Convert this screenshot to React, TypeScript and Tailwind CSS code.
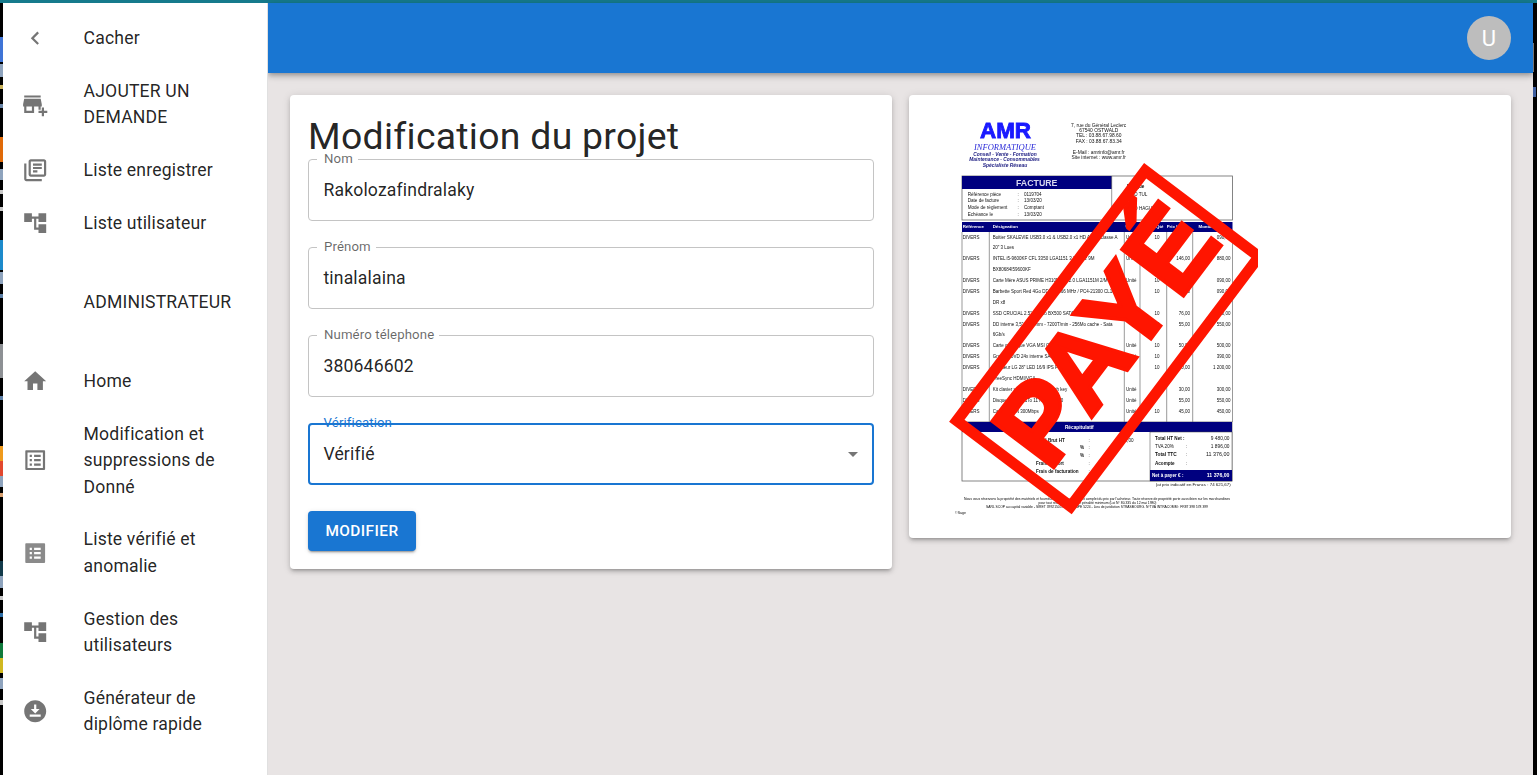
import React from "react";

const P: Record<string, string> = {
  chevron: "M15.41 7.41 14 6l-6 6 6 6 1.41-1.41L10.83 12z",
  addBusiness: "M15 17h2v-3h1v-2l-1-5H2l-1 5v2h1v6h9v-6h4v3zm-6 1H4v-4h5v4zM2 4h15v2H2zM20 18v-3h-2v3h-3v2h3v3h2v-3h3v-2z",
  library: "M4 6H2v14c0 1.1.9 2 2 2h14v-2H4V6zm16-4H8c-1.1 0-2 .9-2 2v12c0 1.1.9 2 2 2h12c1.1 0 2-.9 2-2V4c0-1.1-.9-2-2-2zm0 14H8V4h12v12zM10 9h8v2h-8zm0 3h4v2h-4zm0-6h8v2h-8z",
  tree: "M22 11V3h-7v3H9V3H2v8h7V8h2v10h4v3h7v-8h-7v3h-2V8h2v3z",
  home: "M10 20v-6h4v6h5v-8h3L12 3 2 12h3v8z",
  listOutlined: "M19 5v14H5V5h14m1.1-2H3.9c-.5 0-.9.4-.9.9v16.2c0 .4.4.9.9.9h16.2c.4 0 .9-.5.9-.9V3.9c0-.5-.5-.9-.9-.9zM11 7h6v2h-6V7zm0 4h6v2h-6v-2zm0 4h6v2h-6zM7 7h2v2H7zm0 4h2v2H7zm0 4h2v2H7z",
  listFilled: "M20.1 3H3.9c-.5 0-.9.4-.9.9v16.2c0 .4.4.9.9.9h16.2c.4 0 .9-.5.9-.9V3.9c0-.5-.5-.9-.9-.9zM11 7h6v2h-6V7zm0 4h6v2h-6v-2zm0 4h6v2h-6zM7 7h2v2H7zm0 4h2v2H7zm0 4h2v2H7z",
  download: "M12 2C6.49 2 2 6.49 2 12s4.49 10 10 10 10-4.49 10-10S17.51 2 12 2zm-1 8V6h2v4h3l-4 4-4-4h3zm6 7H7v-2h10v2z",
};

function Icon({ name }: { name: string }) {
  return (
    <svg viewBox="0 0 24 24" className={`w-[26.4px] h-[26.4px] shrink-0 ${name === "listFilled" ? "fill-[#8a8a8a]" : "fill-[#757575]"}`}>
      <path d={P[name]} fillRule="evenodd" />
    </svg>
  );
}

function NavItem({ icon, label, extra }: { icon?: string; label: string; extra?: string }) {
  return (
    <div className={`flex items-center pl-[19px] pr-[18px] py-[13.2px] ${extra ?? ""}`}>
      <div className="w-[61.6px] shrink-0 flex items-center">{icon ? <Icon name={icon} /> : null}</div>
      <span className="text-[17.6px] leading-[26.4px] tracking-[0.165px] text-[#000000de]">{label}</span>
    </div>
  );
}

function Field({ label, value }: { label: string; value: string }) {
  return (
    <div className="relative h-[62px] rounded-[4px] border border-[#c4c4c4] flex items-center pl-[14.4px]">
      <span className="absolute left-[8px] -top-[10px] bg-white pl-[7px] pr-[5px] text-[13.2px] leading-[18px] tracking-[0.12px] text-[#00000099]">{label}</span>
      <span className="text-[17.6px] tracking-[0.165px] text-[#000000de]">{value}</span>
    </div>
  );
}

const strip = [
  ["h-[34px]", "bg-black"], ["h-[25px]", "bg-[#3f74d6]"], ["h-[2px]", "bg-black"], ["h-[13px]", "bg-[#8ea3bd]"],
  ["h-[8px]", "bg-black"], ["h-[4px]", "bg-[#c9b25a]"], ["h-[15px]", "bg-black"], ["h-[4px]", "bg-[#6a86a8]"],
  ["h-[29px]", "bg-black"], ["h-[25px]", "bg-[#e06a08]"], ["h-[7px]", "bg-black"], ["h-[11px]", "bg-[#8ea3bd]"],
  ["h-[10px]", "bg-black"], ["h-[4px]", "bg-[#c8c8c8]"], ["h-[13px]", "bg-black"], ["h-[4px]", "bg-[#c8c8c8]"],
  ["h-[29px]", "bg-black"], ["h-[30px]", "bg-[#1d8acb]"], ["h-[2px]", "bg-black"], ["h-[12px]", "bg-[#8ea3bd]"],
  ["h-[10px]", "bg-black"], ["h-[4px]", "bg-[#5c7fa6]"], ["h-[46px]", "bg-black"], ["h-[34px]", "bg-[#8d9094]"],
  ["h-[18px]", "bg-black"], ["h-[4px]", "bg-[#5c7fa6]"], ["h-[46px]", "bg-black"], ["h-[15px]", "bg-[#ef9a1c]"],
  ["h-[15px]", "bg-[#e2482e]"], ["h-[11px]", "bg-[#8ea3bd]"], ["h-[6px]", "bg-black"], ["h-[4px]", "bg-[#d8a070]"],
  ["h-[64px]", "bg-black"], ["h-[15px]", "bg-[#123a4a]"], ["h-[12px]", "bg-[#8ea3bd]"], ["h-[8px]", "bg-black"],
  ["h-[4px]", "bg-[#c8c8c8]"], ["h-[13px]", "bg-black"], ["h-[4px]", "bg-[#2f6fa8]"], ["h-[26px]", "bg-black"],
  ["h-[15px]", "bg-[#0f7a3c]"], ["h-[15px]", "bg-[#d0b820]"], ["h-[5px]", "bg-black"], ["h-[11px]", "bg-[#8ea3bd]"],
  ["h-[11px]", "bg-black"], ["h-[5px]", "bg-[#c8c8c8]"],
];

type Row = [number, string, string, string, string, string, string];
const rows: Row[] = [
  [127, "DIVERS", 'Boitier SKALEVIE USB3.0 x1 & USB2.0 x1 HD Audio Classe A', "Unité", "10", "", "090,00"],
  [137.3, "", '20" 3 Lues', "", "", "", ""],
  [148.7, "DIVERS", "INTEL i5-9600KF CFL 3350 LGA1151 3,70GHz 9M", "Unité", "", "146,00", "880,00"],
  [159.3, "", "BX80684I59600KF", "", "", "", ""],
  [170.3, "DIVERS", "Carte Mère ASUS PRIME H310M-E R2.0 LGA1151M 2/M-ATX", "Unité", "10", "", "090,00"],
  [181.3, "DIVERS", "Barbette Sport Red 4Go DDR4 2666 MHz / PC4-21300 CL16", "", "10", "80,00", "090,00"],
  [192.3, "", "DR x8", "", "", "", ""],
  [203.3, "DIVERS", "SSD CRUCIAL 2.5\" 240Go BX500 SATA 6G", "", "10", "76,00", "760,00"],
  [214.3, "DIVERS", "DD interne 3,5\" 1To 7mm - 7200T/min - 256Mo cache - Sata", "", "10", "55,00", "550,00"],
  [224.7, "", "6Gb/s", "", "", "", ""],
  [235.7, "DIVERS", "Carte graphique VGA MSI GT710 2GD3 LP OC", "Unité", "10", "50,00", "500,00"],
  [246.7, "DIVERS", "Graveur DVD 24x interne SATA noir", "Unité", "10", "", "390,00"],
  [257.3, "DIVERS", 'Moniteur LG 28" LED 16/9 IPS FHD 1920', "", "10", "120,00", "1 200,00"],
  [268.3, "", "FreeSync HDMI/VGA", "", "", "", ""],
  [279.3, "DIVERS", "Kit clavier souris sans fil Logitech key", "Unité", "", "30,00", "300,00"],
  [290.3, "DIVERS", 'Disque dur 3,5" 1To 11 ms USB 2.0', "Unité", "", "55,00", "550,00"],
  [301, "DIVERS", "Carte WIFI N 300Mbps", "Unité", "10", "45,00", "450,00"],
];

function Tx(props: React.SVGProps<SVGTextElement>) {
  return <text fontFamily="'Liberation Sans', Arial, sans-serif" fontSize={4.5} fill="#111" {...props} />;
}

const navy = "#00007f";

function Invoice() {
  return (
    <svg viewBox="0 0 318 420" className="w-[318px] h-[420px] block blur-[0.4px]">
      {/* Logo */}
      <text x="40" y="28" fontFamily="'Liberation Sans', sans-serif" fontWeight="700" fontSize="22" fill="#1a1aff" stroke="#1a1aff" strokeWidth="0.9" textLength="51" lengthAdjust="spacingAndGlyphs">AMR</text>
      <text x="34" y="39.5" fontFamily="'Liberation Serif', serif" fontStyle="italic" fontSize="7.4" fill="#2a2ad8" textLength="62" lengthAdjust="spacingAndGlyphs">INFORMATIQUE</text>
      <Tx x="65" y="46" textAnchor="middle" fontWeight="700" fontStyle="italic" fontSize="4.9" fill="#1b1b80">Conseil - Vente - Formation</Tx>
      <Tx x="64.5" y="51.2" textAnchor="middle" fontWeight="700" fontStyle="italic" fontSize="4.9" fill="#1b1b80">Maintenance - Consommables</Tx>
      <Tx x="65" y="56.8" textAnchor="middle" fontWeight="700" fontStyle="italic" fontSize="4.9" fill="#1b1b80">Spécialiste Réseau</Tx>
      {/* Address */}
      {[
        ["7, rue du  Général Leclerc", 17],
        ["67540 OSTWALD", 22.2],
        ["TEL : 03.88.67.98.60", 27.2],
        ["FAX : 03.88.67.83.34", 32.5],
        ["E-Mail : amrinfo@amr.fr", 43.8],
        ["Site internet : www.amr.fr", 49],
      ].map(([t, y]) => (
        <Tx key={t as string} x="158.7" y={y as number} textAnchor="middle" fontSize="4.9">{t}</Tx>
      ))}
      {/* Facture box */}
      <rect x="22" y="66" width="270.5" height="44" fill="white" stroke="#666" strokeWidth="0.8" />
      <rect x="22" y="66" width="149.7" height="13" fill={navy} />
      <line x1="171.7" y1="66" x2="171.7" y2="110" stroke="#555" strokeWidth="0.6" />
      <Tx x="96.7" y="75.8" textAnchor="middle" fontWeight="700" fontSize="8.8" fill="#d8d8f0">FACTURE</Tx>
      {[
        ["Référence pièce", "0119704", 85.5],
        ["Date de facture", "13/03/20", 92.2],
        ["Mode de règlement", "Comptant", 98.8],
        ["Echéance le", "13/03/20", 105.5],
      ].map(([a, b, y]) => (
        <g key={a as string}>
          <Tx x="27.7" y={y as number} fontSize="4.6">{a}</Tx>
          <Tx x="77.5" y={y as number} fontSize="4.6">:</Tx>
          <Tx x="84" y={y as number} fontSize="4.6">{b}</Tx>
        </g>
      ))}
      <Tx x="187" y="78" fontWeight="700" fontSize="4.6">F   a             ique</Tx>
      <Tx x="187" y="85.5" fontSize="4.6">I C D    TUL</Tx>
      <Tx x="190" y="99.5" fontSize="4.6">500    HAGUEN</Tx>
      {/* Table */}
      <rect x="22" y="112" width="270.5" height="10" fill={navy} />
      <Tx x="22.7" y="118.2" fontWeight="700" fontSize="4.4" fill="white">Référence</Tx>
      <Tx x="52.7" y="118.2" fontWeight="700" fontSize="4.4" fill="white">Désignation</Tx>
      <Tx x="185.5" y="118.2" fontWeight="700" fontSize="4.4" fill="white">Ua</Tx>
      <Tx x="216" y="118.2" fontWeight="700" fontSize="4.4" fill="white">Qté</Tx>
      <Tx x="226.7" y="118.2" fontWeight="700" fontSize="4.4" fill="white">Prix U.H.</Tx>
      <Tx x="258.5" y="118.2" fontWeight="700" fontSize="4.4" fill="white">Montant</Tx>
      {[22, 49.3, 184.3, 200, 226.7, 252.7, 292.5].map((x) => (
        <line key={x} x1={x} y1="122" x2={x} y2="312" stroke="#555" strokeWidth="0.6" />
      ))}
      {rows.map(([y, a, b, c, d, e, f]) => (
        <g key={y}>
          <Tx x="22.7" y={y + 1.5}>{a}</Tx>
          <Tx x="52.7" y={y + 1.5}>{b}</Tx>
          <Tx x="186" y={y + 1.5}>{c}</Tx>
          <Tx x="217" y={y + 1.5} textAnchor="middle">{d}</Tx>
          <Tx x="250" y={y + 1.5} textAnchor="end">{e}</Tx>
          <Tx x="290.5" y={y + 1.5} textAnchor="end">{f}</Tx>
        </g>
      ))}
      {/* Recap */}
      <rect x="22" y="312" width="270" height="59" fill="white" stroke="#666" strokeWidth="0.8" />
      <rect x="22" y="312" width="270" height="10" fill={navy} />
      <Tx x="139.3" y="318.8" textAnchor="middle" fontWeight="700" fontSize="4.8" fill="white">Récapitulatif</Tx>
      <rect x="210" y="322" width="82" height="49" fill="white" stroke="#444" strokeWidth="0.5" />
      <rect x="210" y="360" width="82" height="11" fill={navy} />
      <Tx x="96" y="331.5" fontWeight="700" fontSize="4.6">Total Brut HT</Tx>
      <Tx x="148.5" y="331.5" fontSize="4.6">:</Tx>
      <Tx x="193.5" y="331.5" textAnchor="end" fontSize="4.6">9 480,00</Tx>
      <Tx x="140" y="339.2" fontWeight="700" fontSize="4.6">%</Tx>
      <Tx x="148.5" y="339.2" fontSize="4.6">:</Tx>
      <Tx x="140" y="347" fontWeight="700" fontSize="4.6">%</Tx>
      <Tx x="148.5" y="347" fontSize="4.6">:</Tx>
      <Tx x="96" y="354.5" fontWeight="700" fontSize="4.6">Frais de port</Tx>
      <Tx x="148.5" y="354.5" fontSize="4.6">:</Tx>
      <Tx x="96" y="362.5" fontWeight="700" fontSize="4.6">Frais de facturation</Tx>
      <Tx x="148.5" y="362.5" fontSize="4.6">:</Tx>
      <Tx x="215" y="329.5" fontWeight="700" fontSize="4.6">Total HT Net :</Tx>
      <Tx x="289.5" y="329.5" textAnchor="end" fontSize="4.8">9 480,00</Tx>
      <Tx x="215" y="337.5" fontSize="4.6">TVA 20%</Tx>
      <Tx x="246" y="337.5" fontSize="4.6">:</Tx>
      <Tx x="289.5" y="337.5" textAnchor="end" fontSize="4.8">1 896,00</Tx>
      <Tx x="215" y="346" fontWeight="700" fontSize="4.8">Total TTC</Tx>
      <Tx x="246" y="346" fontSize="4.6">:</Tx>
      <Tx x="289.5" y="346" textAnchor="end" fontSize="5.4">11 376,00</Tx>
      <Tx x="215" y="355" fontWeight="700" fontSize="4.6">Acompte</Tx>
      <Tx x="246" y="355" fontSize="4.6">:</Tx>
      <Tx x="212" y="367" fontWeight="700" fontSize="4.6" fill="white">Net à payer € :</Tx>
      <Tx x="289.5" y="367" textAnchor="end" fontWeight="700" fontSize="5.2" fill="white">11 376,00</Tx>
      <Tx x="290.7" y="376" textAnchor="end" fontSize="4.4">(at prix indicatif en Francs : 74 621,67)</Tx>
      {/* Footer */}
      <Tx x="157" y="390" textAnchor="middle" fontSize="2.9" fill="#000" textLength="266" lengthAdjust="spacingAndGlyphs">Nous vous réservons la propriété des matériels et fournitures jusqu'au paiement complet du prix par l'acheteur. Toute réserve de propriété porte aussi bien sur les marchandises</Tx>
      <Tx x="157.5" y="394" textAnchor="middle" fontSize="2.9" fill="#000" textLength="118" lengthAdjust="spacingAndGlyphs">pour tout retard de paiement pénalité minimum (Loi N° 80.335 du 12 mai 1980)</Tx>
      <Tx x="157" y="397.5" textAnchor="middle" fontSize="2.9" fill="#000" textLength="222" lengthAdjust="spacingAndGlyphs">SARL SCOP au capital variable - SIRET 39921505700012 - APE 5224 - Lieu de juridiction STRASBOURG. N°TVA INTRACOMM : FR87 398 578 399</Tx>
      <Tx x="15" y="403.5" fontSize="3.6">©Sage</Tx>
      {/* Stamp */}
      <g transform="translate(167.85 228.65) rotate(-53)">
        <rect x="-156.5" y="-71.2" width="313" height="142.5" fill="none" stroke="#ff1500" strokeWidth="11" />
        <text x="2" y="34.5" textAnchor="middle" fontFamily="'Liberation Sans', sans-serif" fontWeight="700" fontSize="112" fill="#ff1500" stroke="#ff1500" strokeWidth="3.5" textLength="290" lengthAdjust="spacing">PAYÉ</text>
      </g>
    </svg>
  );
}

export default function App() {
  return (
    <div className="h-screen w-full overflow-hidden bg-black flex flex-col font-['Roboto',sans-serif]">
      <div className="h-[3px] shrink-0 bg-[#157a8c]" />
      <div className="flex-1 flex min-h-0">
        <div className="w-[3px] shrink-0 flex flex-col">
          {strip.map(([h, c], i) => (
            <div key={i} className={`${h} ${c}`} />
          ))}
        </div>
        <aside className="w-[265px] shrink-0 bg-white border-r border-[#e0e0e0] pt-[8.8px] z-10">
          <NavItem icon="chevron" label="Cacher" />
          <NavItem icon="addBusiness" label="AJOUTER UN DEMANDE" />
          <NavItem icon="library" label="Liste enregistrer" />
          <NavItem icon="tree" label="Liste utilisateur" />
          <NavItem label="ADMINISTRATEUR" extra="my-[26.4px]" />
          <NavItem icon="home" label="Home" />
          <NavItem icon="listOutlined" label="Modification et suppressions de Donné" />
          <NavItem icon="listFilled" label="Liste vérifié et anomalie" />
          <NavItem icon="tree" label="Gestion des utilisateurs" />
          <NavItem icon="download" label="Générateur de diplôme rapide" />
        </aside>
        <div className="flex-1 min-w-0 flex flex-col bg-[#e8e4e4]">
          <header className="h-[70px] shrink-0 bg-[#1976d2] flex items-center justify-end pr-[22px] shadow-[0_2px_4px_-1px_rgba(0,0,0,0.2),0_4px_5px_0_rgba(0,0,0,0.14),0_1px_10px_0_rgba(0,0,0,0.12)] z-[1]">
            <div className="w-[44px] h-[44px] rounded-full bg-[#bdbdbd] flex items-center justify-center text-white text-[22px]">U</div>
          </header>
          <main className="flex-1 p-[22px] grid grid-cols-2 gap-[17px] items-start">
            <section className="bg-white rounded-[4px] p-[18px] shadow-[0_3px_3px_-2px_rgba(0,0,0,0.2),0_3px_4px_0_rgba(0,0,0,0.14),0_1px_8px_0_rgba(0,0,0,0.12)]">
              <h1 className="text-[37.4px] leading-[46.2px] tracking-[0.275px] font-normal text-[#000000de]">Modification du projet</h1>
              <div className="flex flex-col gap-[26px]">
                <Field label="Nom" value="Rakolozafindralaky" />
                <Field label="Prénom" value="tinalalaina" />
                <Field label="Numéro télephone" value="380646602" />
                <div className="relative h-[62px] rounded-[4px] border-2 border-[#1976d2] flex items-center justify-between pl-[13.4px] pr-[7px]">
                  <span className="absolute left-[13.6px] -top-[11px] text-[13.2px] leading-[18px] tracking-[0.12px] text-[#1976d2]">Vérification</span>
                  <span className="text-[17.6px] tracking-[0.165px] text-[#000000de]">Vérifié</span>
                  <svg viewBox="0 0 24 24" className="w-[24px] h-[24px] fill-[#757575]"><path d="M7 10l5 5 5-5z" /></svg>
                </div>
              </div>
              <button className="mt-[26px] h-[40px] w-[108px] rounded-[4px] bg-[#1976d2] text-white text-[15.4px] font-medium tracking-[0.44px] shadow-[0_3px_1px_-2px_rgba(0,0,0,0.2),0_2px_2px_0_rgba(0,0,0,0.14),0_1px_5px_0_rgba(0,0,0,0.12)]">MODIFIER</button>
            </section>
            <section className="bg-white rounded-[4px] pl-[31px] pt-[15px] pb-[8px] shadow-[0_3px_3px_-2px_rgba(0,0,0,0.2),0_3px_4px_0_rgba(0,0,0,0.14),0_1px_8px_0_rgba(0,0,0,0.12)]">
              <Invoice />
            </section>
          </main>
        </div>
        <div className="w-[4px] shrink-0 relative bg-black">
          <div className="absolute left-0 top-[40px] w-[1px] h-[29px] bg-[#8a8a8a]" />
          <div className="absolute left-0 top-[84px] w-[3px] h-[10px] bg-[#3f5fa0]" />
        </div>
      </div>
    </div>
  );
}
